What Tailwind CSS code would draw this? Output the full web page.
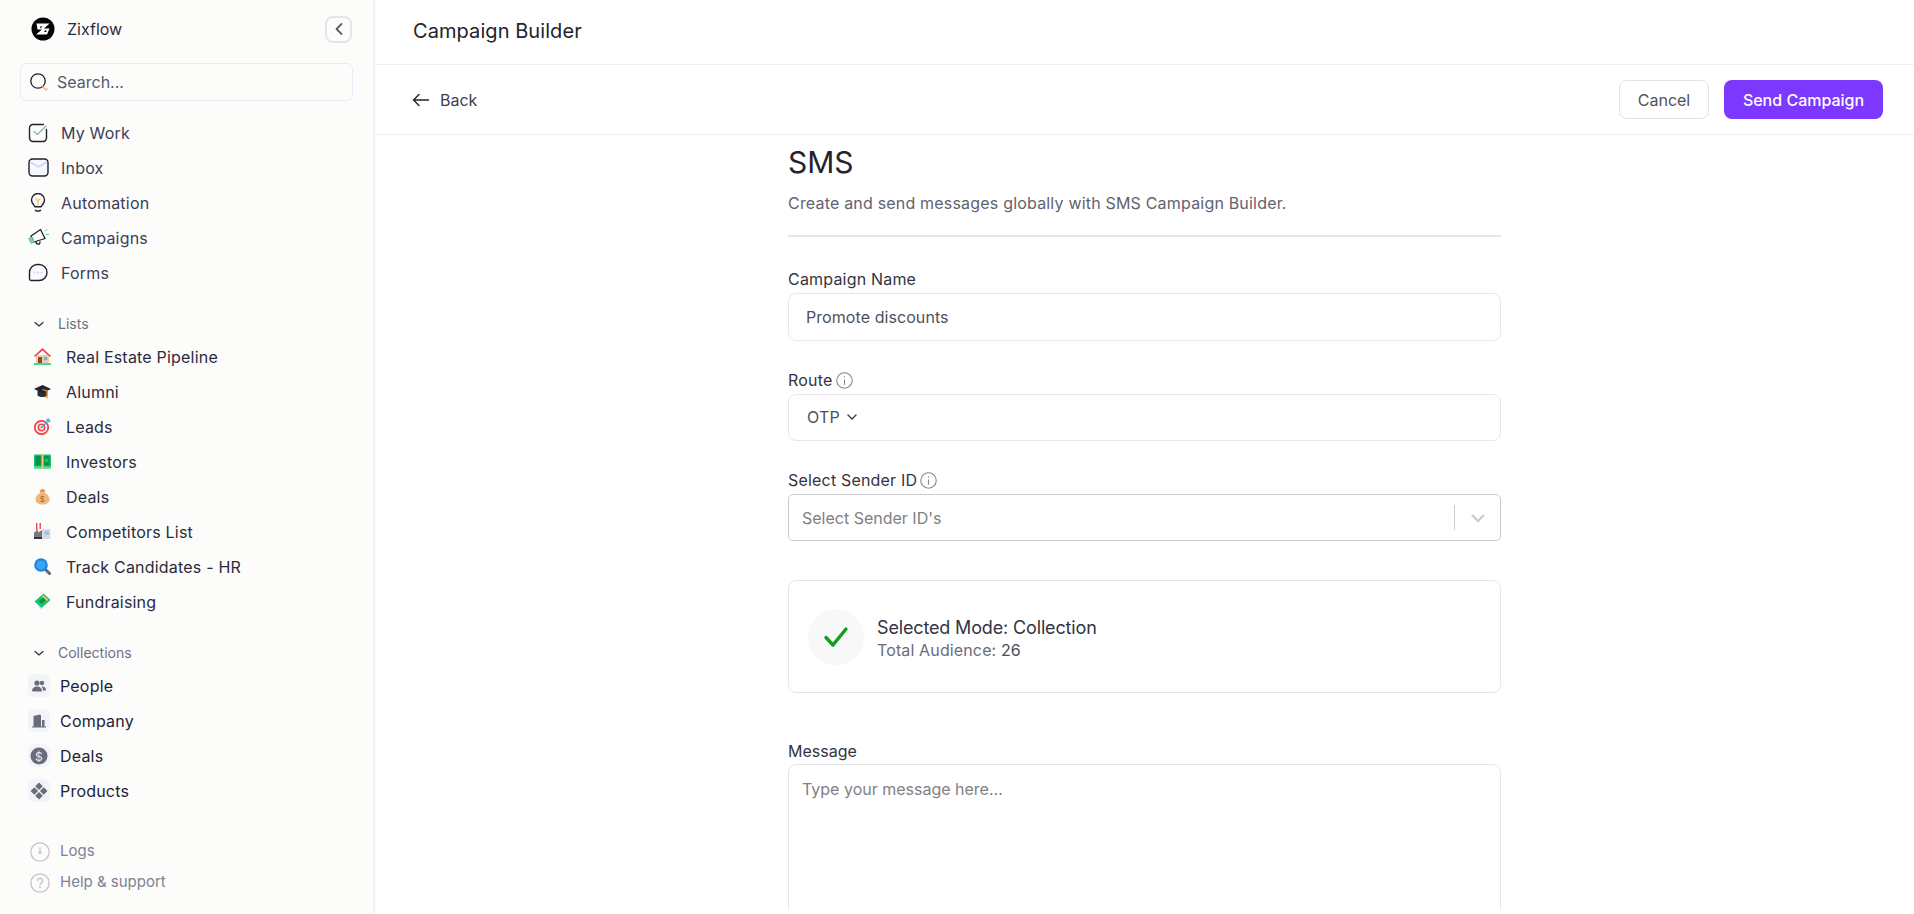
<!DOCTYPE html>
<html>
<head>
    <meta charset="utf-8"/>
    <title>Campaign Builder</title>
    <script src="https://cdn.jsdelivr.net/npm/@tailwindcss/browser@4"></script>
</head>
<body class="bg-white text-[#27272f] font-['Inter',sans-serif] overflow-hidden">
<div class="flex h-[914px] w-[1914px]">
    <!-- Sidebar -->
    <aside class="w-[375px] shrink-0 h-full bg-[#fcfcfa] border-r-2 border-[#f0f0f7] flex flex-col text-base">
        <div class="flex items-center justify-between pl-[31px] pr-[21px] h-[58px] shrink-0">
            <div class="flex items-center gap-[12px]">
                <svg width="24" height="24" viewBox="0 0 24 24"><circle cx="12" cy="12" r="11.500" fill="#050505"/><path d="M5.500 6.500h13l-5.500 5h5.500l-2.500 6h-11l6-5H6.500z" fill="#fff"/><path d="M9 9.500h2.500L9.500 11.500zM13 15h2l1-1.500h-2z" fill="#050505"/></svg>
                <span class="text-[#2c2c3a] leading-6">Zixflow</span>
            </div>
            <button class="w-[27px] h-[27px] rounded-lg border-2 border-[#e4e5ea] flex items-center justify-center">
                <svg width="10" height="14" viewBox="0 0 10 14" fill="none" stroke="#5b5d6b" stroke-width="1.800" stroke-linecap="round" stroke-linejoin="round"><path d="M7.500 2 2.500 7l5 5"/></svg>
            </button>
        </div>
        <div class="ml-[20px] mr-[20px] mt-[5px] h-[38px] rounded-md border border-[#e9ebf6] flex items-center pl-[9px] gap-[7px] shrink-0">
            <svg width="20" height="20" viewBox="0 0 20 20" fill="none"><circle cx="8" cy="9" r="7.200" stroke="#1f2130" stroke-width="1.300"/><path d="M13 14.500l2 2.800c.8.800 2 .300 2-.800" stroke="#f0b27a" stroke-width="1.400" stroke-linecap="round"/></svg>
            <span class="text-[#565a6e]">Search...</span>
        </div>
        <nav class="mt-[14px] pl-[28px] flex flex-col text-[#3c3d56] tracking-[0.2px]">
            <a class="h-[35px] flex items-center gap-[13px]">
                <svg class="shrink-0" width="20" height="20" viewBox="0 0 20 20" fill="none"><path d="M18.500 6.500V15a3.500 3.500 0 0 1-3.500 3.500H5A3.500 3.500 0 0 1 1.500 15V5A3.500 3.500 0 0 1 5 1.500h10.500" stroke="#20212e" stroke-width="1.400" stroke-linecap="round"/><path d="M6 8.500l3.500 3L18 3" stroke="#63c68a" stroke-width="1.200" stroke-linecap="round"/></svg>
                <span>My Work</span>
            </a>
            <a class="h-[35px] flex items-center gap-[12px]">
                <svg class="shrink-0" width="21" height="19" viewBox="0 0 21 19" fill="none"><rect x="1" y="1" width="19" height="17" rx="3.500" fill="#f6f7ff" stroke="#20212e" stroke-width="1.400"/><path d="M3 4.500l7.500 4.500L18 4.500" stroke="#c8d2f5" stroke-width="1.500" stroke-linecap="round"/></svg>
                <span>Inbox</span>
            </a>
            <a class="h-[35px] flex items-center gap-[14px]">
                <svg class="shrink-0 ml-[1px]" width="18" height="19" viewBox="0 0 18 19" fill="none"><path d="M5.800 13.800c0-1.800-3.300-3-3.300-6.800a6.500 6.500 0 0 1 13 0c0 3.800-3.300 5-3.300 6.800z" stroke="#20212e" stroke-width="1.400" stroke-linejoin="round"/><path d="M6.500 17.300c1.500 1 3.500 1 5 0" stroke="#20212e" stroke-width="1.400" stroke-linecap="round"/><path d="M7 6l2 1.800L11 6M9 7.800V12" stroke="#f5c55e" stroke-width="1.300" stroke-linecap="round"/></svg>
                <span>Automation</span>
            </a>
            <a class="h-[35px] flex items-center gap-[12px]">
                <svg class="shrink-0" width="21" height="19" viewBox="0 0 21 19" fill="none"><path d="M3 8 12.500 1.500l4.500 9-11 3.500z" stroke="#20212e" stroke-width="1.300" stroke-linejoin="round"/><path d="M.8 10.500l2.500 5 3-1.500-2.500-5z" fill="#8fd3a4" stroke="#5dbb7c" stroke-width="1"/><path d="M8 13.500c0 3.500 4.500 3.500 4 0" stroke="#20212e" stroke-width="1.300"/><path d="M17.500 3l1.500-1.500M18.500 6.500h2" stroke="#63c68a" stroke-width="1" stroke-linecap="round"/></svg>
                <span>Campaigns</span>
            </a>
            <a class="h-[35px] flex items-center gap-[13px]">
                <svg class="shrink-0" width="20" height="19" viewBox="0 0 20 19" fill="none"><path d="M1.500 10a8 8 0 0 1 8-8.500h1.500a7.800 7.800 0 0 1 0 16H3.500a2 2 0 0 1-2-2z" stroke="#20212e" stroke-width="1.400" fill="#fbfbff"/><circle cx="6.500" cy="9.500" r="1" fill="#c8d2f5"/><circle cx="10" cy="9.500" r="1" fill="#c8d2f5"/><circle cx="13.500" cy="9.500" r="1" fill="#c8d2f5"/></svg>
                <span>Forms</span>
            </a>
        </nav>
        <div class="mt-[19px] pl-[34px] h-[30px] flex items-center gap-[14px] text-sm text-[#6c7085]">
            <svg width="10" height="7" viewBox="0 0 10 7" fill="none" stroke="#2c2e3e" stroke-width="1.200" stroke-linecap="round" stroke-linejoin="round"><path d="M1 1.500 5 5l4-3.500"/></svg>
            <span>Lists</span>
        </div>
        <div class="pl-[34px] flex flex-col text-[#2a2b40] tracking-[0.2px]">
            <a class="h-[35px] flex items-center gap-[15px]">
                <svg width="17" height="17" viewBox="0 0 17 17"><rect x="0" y="15" width="17" height="2" fill="#3ddc97"/><path d="M2 7h13v8H2z" fill="#f6cfa6"/><path d="M0 8 8.500 0 17 8l-1 1-7.500-6.500L1 9z" fill="#e5484d"/><rect x="4" y="9" width="4" height="6" fill="#8a4b32"/><circle cx="11.500" cy="10.500" r="2" fill="#6fb4ea"/></svg>
                <span>Real Estate Pipeline</span>
            </a>
            <a class="h-[35px] flex items-center gap-[15px]">
                <svg width="17" height="17" viewBox="0 0 17 17"><path d="M3.500 7.500v5c3 2 7 2 10 0v-5z" fill="#2a2f3c"/><path d="M0 6l8.500-4L17 6 8.500 10z" fill="#1f2430"/><path d="M8.500 6.500 13 8v7.500" stroke="#e89a3c" stroke-width="1.300" fill="none"/></svg>
                <span>Alumni</span>
            </a>
            <a class="h-[35px] flex items-center gap-[15px]">
                <svg width="17" height="17" viewBox="0 0 17 17" fill="none"><circle cx="7.500" cy="9.500" r="6.700" stroke="#ef4444" stroke-width="1.800" fill="#fff"/><circle cx="7.500" cy="9.500" r="3.200" stroke="#ef4444" stroke-width="1.600"/><circle cx="7.500" cy="9.500" r="1" fill="#ef4444"/><path d="M7.500 9.500l6-6" stroke="#4f9ee8" stroke-width="1.400"/><path d="M12 1.500l1 2 2 1 2-1.500-1.500-1L15 0z" fill="#5aa9ec"/></svg>
                <span>Leads</span>
            </a>
            <a class="h-[35px] flex items-center gap-[15px]">
                <svg width="17" height="15" viewBox="0 0 17 15"><rect y="0.500" width="17" height="14" rx="1" fill="#12c46b"/><rect x="1.500" y="2" width="6" height="9.500" fill="#0b8f4e"/><rect x="9.500" y="2" width="6" height="9.500" fill="#0b8f4e"/><rect x="7.500" y="0.500" width="2" height="14" fill="#f2c66d"/><rect y="12.500" width="7.500" height="2" fill="#5fdc9a"/><rect x="9.500" y="12.500" width="7.500" height="2" fill="#5fdc9a"/><circle cx="12.500" cy="6.500" r="2" fill="#12c46b"/></svg>
                <span>Investors</span>
            </a>
            <a class="h-[35px] flex items-center gap-[15px]">
                <svg width="17" height="17" viewBox="0 0 17 17"><path d="M6.500 4.500C3 6 1.500 9 1.500 11.500c0 3.500 3.200 5 7 5s7-1.500 7-5c0-2.500-1.500-5.500-5-7z" fill="#f2b878"/><path d="M6.500 4.500 5.500 1.500 7 2 8.500.5 10 2l1.500-.5-1 3z" fill="#d99a5c"/><text x="8.500" y="14" font-size="8" text-anchor="middle" fill="#a5622a" font-family="Inter">$</text></svg>
                <span>Deals</span>
            </a>
            <a class="h-[35px] flex items-center gap-[15px]">
                <svg width="17" height="17" viewBox="0 0 17 17"><path d="M0 9.500l4-2.500v2.500L8 7v9H0z" fill="#77787d"/><rect x="8" y="6" width="8.500" height="10" fill="#d9dde3"/><rect x="10.500" y="8" width="4.500" height="4" fill="#9cc4e4"/><rect x="2" y="0" width="1.400" height="7.500" fill="#e5484d"/><rect x="5.500" y="0" width="1.400" height="6" fill="#e5484d"/><rect y="14" width="8" height="2" fill="#33343a"/></svg>
                <span>Competitors List</span>
            </a>
            <a class="h-[35px] flex items-center gap-[15px]">
                <svg width="17" height="17" viewBox="0 0 17 17"><path d="M11 11l4.500 4.500" stroke="#5f6680" stroke-width="3" stroke-linecap="round"/><circle cx="7" cy="7" r="6.800" fill="#1f86e0"/><circle cx="7" cy="7" r="4.500" fill="#3aa6f2"/></svg>
                <span>Track Candidates - HR</span>
            </a>
            <a class="h-[35px] flex items-center gap-[15px]">
                <svg width="17" height="17" viewBox="0 0 17 17"><path d="M3 13l5 4 1-4z" fill="#dfe3e8"/><path d="M.5 8.500 9.500.5 16.500 7l-9 8z" fill="#16c46b"/><path d="M5 8.500l4.500-4 2.500 2.500-4.500 4z" fill="#0b8f4e"/><path d="M7.500 3l1.500-1 5.500 5-1.500 1z" fill="#f2c66d"/></svg>
                <span>Fundraising</span>
            </a>
        </div>
        <div class="mt-[19px] pl-[34px] h-[30px] flex items-center gap-[14px] text-sm text-[#6c7085]">
            <svg width="10" height="7" viewBox="0 0 10 7" fill="none" stroke="#2c2e3e" stroke-width="1.200" stroke-linecap="round" stroke-linejoin="round"><path d="M1 1.500 5 5l4-3.500"/></svg>
            <span>Collections</span>
        </div>
        <div class="pl-[28px] flex flex-col text-[#22233a] tracking-[0.2px]">
            <a class="h-[35px] flex items-center gap-[10px]">
                <span class="w-[22px] h-[23px] rounded-md bg-[#f3f4fa] flex items-center justify-center">
                    <svg width="14" height="12" viewBox="0 0 14 12" fill="#6a6c78"><circle cx="5" cy="3" r="2.600"/><circle cx="10" cy="3" r="2.200"/><path d="M0 11c0-3 2-4.500 5-4.500S10 8 10 11.500H1zM10.500 6.500c2 0 3.500 1.500 3.500 4h-3c0-1.500-.5-3-1.500-3.800z"/></svg>
                </span>
                <span>People</span>
            </a>
            <a class="h-[35px] flex items-center gap-[10px]">
                <span class="w-[22px] h-[23px] rounded-md bg-[#f3f4fa] flex items-center justify-center">
                    <svg width="14" height="14" viewBox="0 0 14 14" fill="#6a6c78"><path d="M1.500 12.500V2L8 .5l1 1v11zM10 6h2.500v6.500H10zM0 12.500h14v1H0z"/></svg>
                </span>
                <span>Company</span>
            </a>
            <a class="h-[35px] flex items-center gap-[10px]">
                <span class="w-[22px] h-[23px] rounded-md bg-[#f3f4fa] flex items-center justify-center">
                    <svg width="18" height="18" viewBox="0 0 18 18"><circle cx="9" cy="9" r="8.500" fill="#6a6c78"/><text x="9" y="13.500" font-size="12" text-anchor="middle" fill="#e8e9f0" font-family="Inter">$</text></svg>
                </span>
                <span>Deals</span>
            </a>
            <a class="h-[35px] flex items-center gap-[10px]">
                <span class="w-[22px] h-[23px] rounded-md bg-[#f3f4fa] flex items-center justify-center">
                    <svg width="18" height="18" viewBox="0 0 18 18" fill="#6a6c78"><path d="M9 .5 12.800 4.300 9 8.100 5.200 4.300zM4.300 5.200 8.100 9 4.300 12.800.5 9zM13.700 5.200 17.500 9l-3.800 3.800L9.900 9zM9 9.900l3.800 3.800L9 17.500l-3.800-3.800z"/></svg>
                </span>
                <span>Products</span>
            </a>
        </div>
        <div class="mt-[28px] pl-[30px] flex flex-col text-[15px] text-[#7d8296]">
            <a class="h-[31px] flex items-center gap-[10px]">
                <svg width="20" height="20" viewBox="0 0 20 20" fill="none"><circle cx="10" cy="10" r="9.200" stroke="#c4c6cc" stroke-width="1.300"/><path d="M10 5v5" stroke="#c4c6cc" stroke-width="1.200"/><circle cx="10" cy="10.500" r="1.600" fill="#c4c6cc"/></svg>
                <span>Logs</span>
            </a>
            <a class="h-[31px] flex items-center gap-[10px]">
                <svg width="20" height="20" viewBox="0 0 20 20" fill="none"><circle cx="10" cy="10" r="9.200" stroke="#c4c6cc" stroke-width="1.300"/><path d="M7.500 7.800a2.500 2.500 0 1 1 3.700 2.200c-.8.500-1.200 1-1.200 2" stroke="#c4c6cc" stroke-width="1.400" stroke-linecap="round"/><circle cx="10" cy="14.500" r="1" fill="#c4c6cc"/></svg>
                <span>Help &amp; support</span>
            </a>
        </div>
    </aside>

    <!-- Main -->
    <main class="flex-1 min-w-0 h-full flex flex-col pb-[5px]">
        <header class="h-[65px] shrink-0 border-b border-[#eeeef5] flex items-center pl-[38px] pb-[3px]">
            <h1 class="text-xl leading-7 text-[#23232b] tracking-[0.07px]">Campaign Builder</h1>
        </header>
        <div class="h-[70px] shrink-0 border-b border-[#eeeef5] flex items-center justify-between pl-[37px] pr-[31px]">
            <button class="flex items-center gap-[10px] text-base text-[#3c3d56]">
                <svg width="18" height="14" viewBox="0 0 18 14" fill="none" stroke="#20212e" stroke-width="1.400" stroke-linecap="round" stroke-linejoin="round"><path d="M7 1.500 1.500 7 7 12.500M1.500 7H16.500"/></svg>
                Back
            </button>
            <div class="flex items-center gap-[15px]">
                <button class="h-[39px] w-[90px] rounded-lg border border-[#e2e3e9] text-base text-[#4e5266]">Cancel</button>
                <button class="h-[39px] w-[159px] rounded-lg bg-[#7c38ff] text-base text-white font-medium">Send Campaign</button>
            </div>
        </div>
        <div class="flex-1 min-h-0 overflow-hidden flex justify-center">
            <div class="w-[713px] pt-[9px] tracking-[0.19px]">
                <h2 class="text-3xl leading-9 text-[#24242c] tracking-normal">SMS</h2>
                <p class="mt-[11px] text-base leading-6 text-[#5f6270]">Create and send messages globally with SMS Campaign Builder.</p>
                <div class="mt-[20px] border-t-2 border-[#e6e6e8]"></div>

                <label class="mt-[30px] block text-base leading-6 text-[#33343f]">Campaign Name</label>
                <div class="mt-[2px] h-[48px] rounded-lg border border-[#e6e7ee] flex items-center pl-[17px] text-base text-[#50505c] tracking-[0.07px]">Promote discounts</div>

                <label class="mt-[27px] flex items-center gap-[4px] text-base leading-6 text-[#33343f]">
                    Route
                    <svg width="17" height="17" viewBox="0 0 16 16" fill="none" stroke="#85878f" stroke-width="1"><circle cx="8" cy="8" r="7.300"/><path d="M8 7v5M8 4v1.200"/></svg>
                </label>
                <div class="mt-[2px] h-[47px] rounded-lg border border-[#e6e7ee] flex items-center pl-[18px] pb-[1px] gap-[6px] text-base text-[#50505c]">
                    OTP
                    <svg width="12" height="8" viewBox="0 0 12 8" fill="none" stroke="#3c3d46" stroke-width="1.400" stroke-linecap="round" stroke-linejoin="round"><path d="M2 2l4 4 4-4"/></svg>
                </div>

                <label class="mt-[27px] flex items-center gap-[3px] text-base leading-6 text-[#33343f]">
                    Select Sender ID
                    <svg width="17" height="17" viewBox="0 0 16 16" fill="none" stroke="#85878f" stroke-width="1"><circle cx="8" cy="8" r="7.300"/><path d="M8 7v5M8 4v1.200"/></svg>
                </label>
                <div class="mt-[2px] h-[47px] rounded-[5px] border border-[#cccccc] flex items-center pl-[13px] text-base text-[#808080] tracking-normal">
                    <span class="flex-1">Select Sender ID's</span>
                    <span class="w-px h-[25px] bg-[#cccccc]"></span>
                    <span class="w-[45px] flex justify-center">
                        <svg width="16" height="12" viewBox="0 0 16 12" fill="none" stroke="#cccccc" stroke-width="2.400"><path d="M2 3l6 6 6-6"/></svg>
                    </span>
                </div>

                <div class="mt-[39px] h-[113px] rounded-lg border border-[#e4e5ea] flex items-center pl-[19px] gap-[13px] tracking-normal">
                    <span class="w-[56px] h-[56px] rounded-full bg-[#f8f8f8] flex items-center justify-center">
                        <svg width="26" height="22" viewBox="0 0 26 22" fill="none" stroke="#169c1e" stroke-width="3.400" stroke-linecap="round" stroke-linejoin="round"><path d="M3 11.500 10 19 23 3"/></svg>
                    </span>
                    <div class="pt-[3px]">
                        <div class="text-lg leading-6 text-[#33343f] tracking-[-0.15px]">Selected Mode: Collection</div>
                        <div class="text-base leading-[21px] text-[#6a6c78] tracking-[0.13px]">Total Audience: <span class="text-[#4a4b57]">26</span></div>
                    </div>
                </div>

                <label class="mt-[46px] block text-base leading-6 text-[#33343f] tracking-normal">Message</label>
                <div class="mt-[1px] h-[400px] rounded-lg border border-[#e4e5ea] pl-[13px] pt-[12px] text-base leading-6 text-[#808086] tracking-normal">Type your message here...</div>
            </div>
        </div>
    </main>
</div>
</body>
</html>
